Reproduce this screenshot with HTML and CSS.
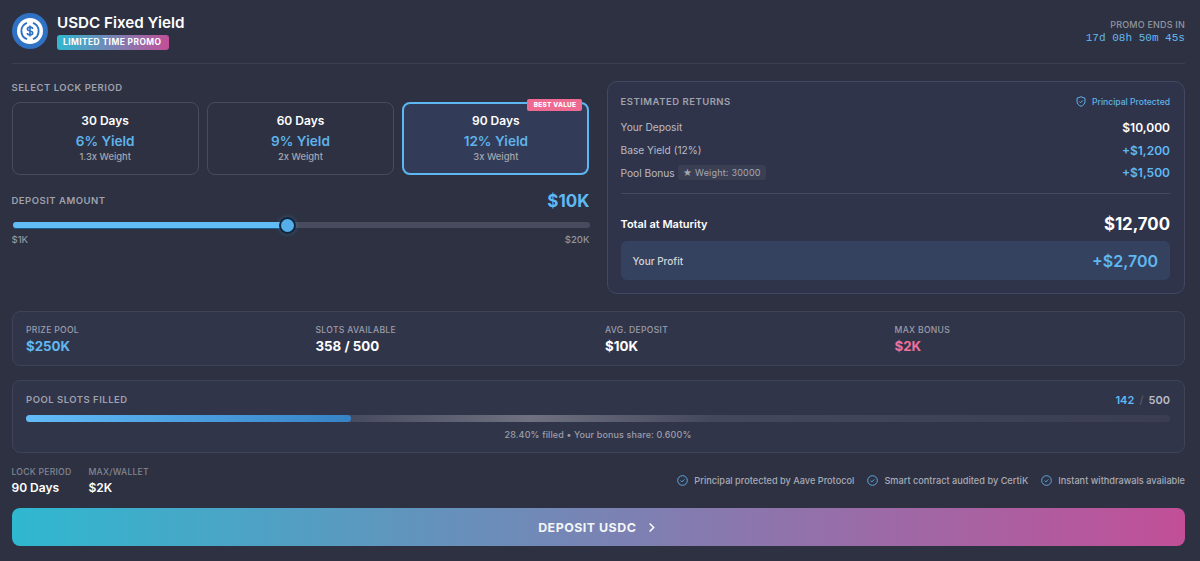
FILE: index.html
```html
<!DOCTYPE html>
<html lang="en">
<head>
<meta charset="utf-8">
<title>USDC Fixed Yield</title>
<link rel="stylesheet" href="styles.css">
</head>
<body>
<main class="page">
  <header class="header">
    <div class="brand">
      <svg class="logo" viewBox="0 0 36 36" aria-hidden="true">
        <circle cx="18" cy="18" r="18" fill="#2f72c4"/>
        <circle cx="18" cy="18" r="13" fill="#fff"/>
        <path d="M15 9.8a8.8 8.8 0 0 0 0 16.4M21 9.8a8.8 8.8 0 0 1 0 16.4" fill="none" stroke="#2f72c4" stroke-width="1.9"/>
        <path d="M20.6 15.9c0-1.1-1.1-1.8-2.6-1.8s-2.6.7-2.6 1.9c0 2.8 5.3 1.2 5.3 4 0 1.2-1.2 1.9-2.7 1.9s-2.7-.7-2.7-1.9M18 12.6v10.8" fill="none" stroke="#2f72c4" stroke-width="1.6"/>
      </svg>
      <div class="brand-text">
        <h1 class="title">USDC Fixed Yield</h1>
        <span class="promo-badge">LIMITED TIME PROMO</span>
      </div>
    </div>
    <div class="timer">
      <div class="timer-label">PROMO ENDS IN</div>
      <div class="timer-value">17d 08h 50m 45s</div>
    </div>
  </header>

  <section class="main-grid">
    <div class="left">
      <div class="section-label lock-label">SELECT LOCK PERIOD</div>
      <div class="periods">
        <div class="period">
          <div class="period-days">30 Days</div>
          <div class="period-yield">6% Yield</div>
          <div class="period-weight">1.3x Weight</div>
        </div>
        <div class="period">
          <div class="period-days">60 Days</div>
          <div class="period-yield">9% Yield</div>
          <div class="period-weight">2x Weight</div>
        </div>
        <div class="period period-active">
          <span class="best">BEST VALUE</span>
          <div class="period-days">90 Days</div>
          <div class="period-yield">12% Yield</div>
          <div class="period-weight">3x Weight</div>
        </div>
      </div>
      <div class="deposit-head">
        <div class="section-label">DEPOSIT AMOUNT</div>
        <div class="deposit-value">$10K</div>
      </div>
      <div class="slider">
        <div class="slider-fill"></div>
        <div class="slider-thumb"></div>
      </div>
      <div class="slider-scale"><span>$1K</span><span>$20K</span></div>
    </div>

    <aside class="returns">
      <div class="returns-head">
        <div class="section-label returns-label">ESTIMATED RETURNS</div>
        <div class="protected">
          <svg class="shield" viewBox="0 0 24 24" aria-hidden="true"><path d="M12 2.5l8 3v6c0 5-3.4 8.6-8 10-4.6-1.4-8-5-8-10v-6z" fill="none" stroke="#5fb4ec" stroke-width="2" stroke-linejoin="round"/><path d="M8.5 12l2.5 2.5 4.5-4.5" fill="none" stroke="#5fb4ec" stroke-width="2"/></svg>
          Principal Protected
        </div>
      </div>
      <div class="row"><span class="row-label">Your Deposit</span><span class="row-value">$10,000</span></div>
      <div class="row"><span class="row-label">Base Yield (12%)</span><span class="row-value blue">+$1,200</span></div>
      <div class="row"><span class="row-label">Pool Bonus <span class="weight-chip">★ Weight: 30000</span></span><span class="row-value blue">+$1,500</span></div>
      <div class="total">
        <span class="total-label">Total at Maturity</span>
        <span class="total-value">$12,700</span>
      </div>
      <div class="profit">
        <span class="profit-label">Your Profit</span>
        <span class="profit-value">+$2,700</span>
      </div>
    </aside>
  </section>

  <section class="stats">
    <div class="stat"><div class="stat-label">PRIZE POOL</div><div class="stat-value blue">$250K</div></div>
    <div class="stat"><div class="stat-label">SLOTS AVAILABLE</div><div class="stat-value">358 / 500</div></div>
    <div class="stat"><div class="stat-label">AVG. DEPOSIT</div><div class="stat-value">$10K</div></div>
    <div class="stat"><div class="stat-label">MAX BONUS</div><div class="stat-value pink">$2K</div></div>
  </section>

  <section class="pool">
    <div class="pool-head">
      <div class="section-label">POOL SLOTS FILLED</div>
      <div class="pool-count"><span class="blue">142</span> <span class="slash">/</span> 500</div>
    </div>
    <div class="pool-bar"><div class="pool-fill"></div></div>
    <div class="pool-note">28.40% filled • Your bonus share: 0.600%</div>
  </section>

  <section class="foot">
    <div class="foot-stats">
      <div><div class="foot-label">LOCK PERIOD</div><div class="foot-value">90 Days</div></div>
      <div><div class="foot-label">MAX/WALLET</div><div class="foot-value">$2K</div></div>
    </div>
    <div class="checks">
      <span class="check"><svg class="check-icon" viewBox="0 0 24 24" aria-hidden="true"><circle cx="12" cy="12" r="10.5" fill="none" stroke="#5fb4ec" stroke-width="2"/><path d="M8 12.2l2.8 2.8 5.2-5.4" fill="none" stroke="#5fb4ec" stroke-width="2"/></svg>Principal protected by Aave Protocol</span>
      <span class="check"><svg class="check-icon" viewBox="0 0 24 24" aria-hidden="true"><circle cx="12" cy="12" r="10.5" fill="none" stroke="#5fb4ec" stroke-width="2"/><path d="M8 12.2l2.8 2.8 5.2-5.4" fill="none" stroke="#5fb4ec" stroke-width="2"/></svg>Smart contract audited by CertiK</span>
      <span class="check"><svg class="check-icon" viewBox="0 0 24 24" aria-hidden="true"><circle cx="12" cy="12" r="10.5" fill="none" stroke="#5fb4ec" stroke-width="2"/><path d="M8 12.2l2.8 2.8 5.2-5.4" fill="none" stroke="#5fb4ec" stroke-width="2"/></svg>Instant withdrawals available</span>
    </div>
  </section>

  <button class="cta" type="button">DEPOSIT USDC
    <svg class="chevron" viewBox="0 0 24 24" aria-hidden="true"><path d="M8.5 4.5l7.5 7.5-7.5 7.5" fill="none" stroke="#fff" stroke-width="2.8"/></svg>
  </button>
</main>
</body>
</html>
```

FILE: styles.css
```css
* { box-sizing: border-box; }
html, body { margin: 0; height: 100%; overflow: hidden; }
body { background: #2d3142; color: #fff; font-family: Inter, "Liberation Sans", sans-serif; }
.page { padding: 13px 15px 0 11.5px; display: flex; flex-direction: column; }
.blue { color: #5fb8f2; }
.pink { color: #ef6f9b; }

.header { height: 51px; display: flex; justify-content: space-between; align-items: flex-start; border-bottom: 1px solid #3b3f52; }
.brand { display: flex; gap: 9.5px; }
.logo { width: 36px; height: 36px; display: block; }
.title { margin: 1px 0 3px; font-size: 15.2px; line-height: 18px; font-weight: 600; }
.promo-badge { display: block; width: 112px; height: 15px; border-radius: 3px; font-size: 8.4px; line-height: 15px; font-weight: 700; letter-spacing: .45px; padding-left: 6px; background: linear-gradient(90deg, #2fb8d0, #c24f98); }
.timer { text-align: right; padding-top: 6px; }
.timer-label { font-size: 9px; line-height: 12px; font-weight: 500; color: #92959f; letter-spacing: .2px; }
.timer-value { font-family: "Liberation Mono", monospace; font-size: 11px; line-height: 14px; color: #64b8ee; letter-spacing: .02px; }

.main-grid { display: flex; gap: 17px; margin-top: 17px; height: 213px; }
.left { width: 578px; padding-top: 1px; }
.section-label { font-size: 9.5px; line-height: 12px; font-weight: 600; letter-spacing: .5px; color: #9fa2ad; }
.lock-label { margin-bottom: 8px; }
.periods { display: grid; grid-template-columns: repeat(3, 1fr); gap: 8px; }
.period { position: relative; height: 73px; border: 1px solid #474b5e; border-radius: 8px; text-align: center; padding-top: 10px; }
.period-active { border: 2px solid #5db7f0; background: #323c58; padding-top: 9px; }
.period-days { font-size: 12px; line-height: 16px; font-weight: 600; }
.period-yield { font-size: 13.6px; line-height: 18px; margin-top: 3px; font-weight: 600; color: #5fb3e8; }
.period-weight { font-size: 9.4px; line-height: 12px; margin-top: 1px; font-weight: 500; color: #a4a6af; }
.best { position: absolute; top: -5px; right: 5px; height: 12px; width: 55px; background: #ee6a91; border-radius: 2px; font-size: 6.4px; line-height: 12px; font-weight: 800; letter-spacing: .3px; text-align: center; }

.deposit-head { display: flex; justify-content: space-between; align-items: center; margin-top: 13px; height: 26px; }
.deposit-value { font-size: 17px; font-weight: 700; color: #5fb8f2; line-height: 24px; }
.slider { position: relative; height: 6px; margin-top: 8px; margin-left: 1px; border-radius: 3px; background: #484b5d; }
.slider-fill { height: 6px; width: 274px; border-radius: 3px; background: #62bcf8; box-shadow: 0 1px 0 #1c5c8c; }
.slider-thumb { position: absolute; left: 266px; top: -5.5px; width: 17px; height: 17px; border-radius: 50%; background: #55aeea; border: 2px solid #10263f; box-shadow: 0 0 5px rgba(95,184,242,.3); }
.slider-scale { display: flex; justify-content: space-between; margin-top: 6px; font-size: 9.5px; line-height: 12px; font-weight: 500; color: #92959f; }

.returns { flex: 1; border: 1px solid #424863; border-radius: 10px; background: #30344b; padding: 0 14px 0 13px; }
.returns-head { display: flex; justify-content: space-between; align-items: center; height: 34px; padding-top: 5px; }
.protected { display: flex; align-items: center; gap: 5px; font-size: 8.6px; font-weight: 500; color: #5fb3e8; }
.shield { width: 12px; height: 13px; }
.row { display: flex; justify-content: space-between; align-items: center; height: 22.7px; }
.row-label { font-size: 10.2px; font-weight: 400; color: #b9bbc4; display: flex; align-items: center; gap: 3px; }
.row-value { font-size: 12px; font-weight: 600; }
.row-value.blue { color: #5fb8f2; }
.weight-chip { height: 15px; line-height: 15px; padding: 0 5px; border-radius: 3px; background: #3b3f53; font-size: 9px; letter-spacing: .2px; color: #a6a8b2; }
.total { display: flex; justify-content: space-between; align-items: center; border-top: 1px solid #454a60; margin-top: 9px; height: 48px; padding-top: 12px; }
.total-label { font-size: 11px; font-weight: 600; }
.total-value { font-size: 16.8px; font-weight: 700; }
.profit { display: flex; justify-content: space-between; align-items: center; height: 39px; padding: 0 12px; border-radius: 6px; background: #35425f; }
.profit-label { font-size: 10px; font-weight: 500; color: #d3d5da; }
.profit-value { font-size: 16px; font-weight: 600; color: #5fb8f2; }

.stats { display: grid; grid-template-columns: repeat(4, 1fr); column-gap: 14px; height: 55px; margin-top: 17px; padding: 12px 14px 0 13.5px; border: 1px solid #3f4358; border-radius: 8px; background: #31354a; }
.stat-label { font-size: 8.6px; line-height: 12px; font-weight: 500; letter-spacing: .3px; color: #9b9ea9; }
.stat-value { font-size: 13.3px; line-height: 18px; margin-top: 1px; font-weight: 700; }

.pool { height: 73px; margin-top: 14px; padding: 12px 14px 0 13.5px; border: 1px solid #3f4358; border-radius: 8px; background: #31354a; }
.pool-head { display: flex; justify-content: space-between; align-items: center; height: 14px; }
.pool-count { font-size: 11px; font-weight: 600; color: #b9bbc4; word-spacing: 1.4px; }
.pool-count .blue { color: #5fb8f2; }
.slash { color: #5f6272; font-weight: 400; padding: 0 1px; }
.pool-bar { height: 7px; margin-top: 8px; border-radius: 4px; background: linear-gradient(90deg, #44485b 27%, #6f7180 44%, #44485b 60%, #3a3e50 100%); }
.pool-fill { height: 7px; width: 325px; border-radius: 4px; background: linear-gradient(90deg, #62bcf8, #3683c6); }
.pool-note { text-align: center; font-size: 9px; line-height: 12px; margin-top: 7px; color: #9b9ea9; font-weight: 500; letter-spacing: .12px; }

.foot { display: flex; justify-content: space-between; align-items: center; height: 42px; margin-top: 7px; }
.foot-stats { display: flex; gap: 17px; }
.foot-label { font-size: 8.7px; line-height: 12px; font-weight: 500; color: #83868f; letter-spacing: .2px; }
.foot-value { font-size: 12px; line-height: 16px; margin-top: 2px; font-weight: 600; }
.checks { display: flex; gap: 13px; margin-top: -2px; }
.check { display: flex; align-items: center; gap: 6px; font-size: 9.2px; font-weight: 500; color: #a9abb5; }
.check-icon { width: 11px; height: 11px; }

.cta { display: flex; align-items: center; justify-content: center; gap: 9px; width: 100%; height: 38px; margin-top: 6px; border: 0; border-radius: 8px; color: #f4f5f8; font: 700 12.4px Inter, "Liberation Sans", sans-serif; letter-spacing: .5px; background: linear-gradient(90deg, #2fb8d0, #c24f98); }
.chevron { width: 13px; height: 13px; }
```
